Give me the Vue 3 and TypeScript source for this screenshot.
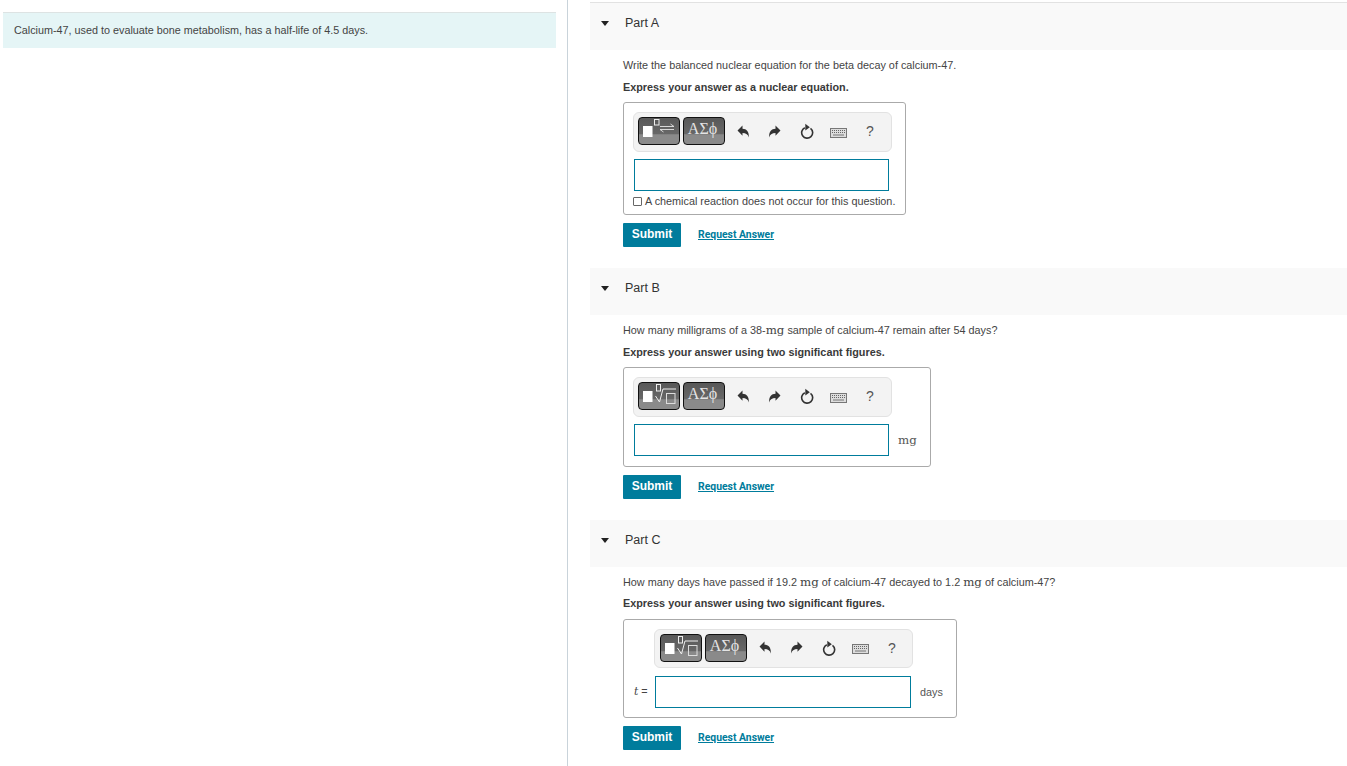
<script setup lang="ts">
interface Seg { t: string; mg?: boolean }
interface Part {
  id: string
  question: Seg[]
  hint: string
  kind: 'chem' | 'mg' | 'days'
}
const parts: Part[] = [
  { id: 'A', kind: 'chem', hint: 'Express your answer as a nuclear equation.',
    question: [{ t: 'Write the balanced nuclear equation for the beta decay of calcium-47.' }] },
  { id: 'B', kind: 'mg', hint: 'Express your answer using two significant figures.',
    question: [{ t: 'How many milligrams of a 38-' }, { t: 'mg', mg: true }, { t: ' sample of calcium-47 remain after 54 days?' }] },
  { id: 'C', kind: 'days', hint: 'Express your answer using two significant figures.',
    question: [{ t: 'How many days have passed if 19.2 ' }, { t: 'mg', mg: true }, { t: ' of calcium-47 decayed to 1.2 ' }, { t: 'mg', mg: true }, { t: ' of calcium-47?' }] }
]
</script>

<template>
  <div class="page">
    <aside class="left">
      <div class="intro">Calcium-47, used to evaluate bone metabolism, has a half-life of 4.5 days.</div>
    </aside>
    <main class="right">
      <section v-for="p in parts" :key="p.id" class="part" :class="'part-' + p.id">
        <header class="part-head">
          <span class="caret"></span>
          <span class="part-title">Part {{ p.id }}</span>
        </header>
        <div class="part-body">
          <p class="question"><template v-for="(s, i) in p.question" :key="i"><span v-if="s.mg" class="mg">{{ s.t }}</span><template v-else>{{ s.t }}</template></template></p>
          <p class="hint">{{ p.hint }}</p>
          <div class="answer" :class="'answer-' + p.kind">
            <div class="answer-grid">
              <span v-if="p.kind === 'days'" class="prefix"><i>t</i> =</span>
              <div class="toolbar">
                <button class="tbtn tbtn-tpl" type="button" aria-label="Templates">
                  <svg width="40" height="26" viewBox="0 0 40 26">
                    <rect x="4" y="8" width="9.500" height="11" fill="#fff" />
                    <template v-if="p.kind === 'chem'">
                      <rect x="15.500" y="1.500" width="4.500" height="5.500" fill="none" stroke="#eee" />
                      <path d="M21 8.500h14l-3.500-2.500M35 11.500H21l3.500 2.500" fill="none" stroke="#e4e4e4" stroke-width=".9" />
                    </template>
                    <template v-else>
                      <rect x="17.500" y="1.500" width="4" height="6.500" fill="none" stroke="#eee" />
                      <path d="M16.500 13l4 6 3.500-13h13" fill="none" stroke="#eee" />
                      <rect x="27.500" y="10.500" width="8.500" height="10" fill="none" stroke="#ddd" />
                    </template>
                  </svg>
                </button>
                <button class="tbtn tbtn-sym" type="button">ΑΣϕ</button>
                <span class="tool t-undo">
                  <svg width="13" height="13" viewBox="0 0 13 13"><path d="M.5 5.500l5-5v3.200c4 0 6.800 2.800 6.300 8.800-.6-3-2.800-4.500-6.300-4.500v2.800z" fill="#333" /></svg>
                </span>
                <span class="tool t-redo">
                  <svg width="13" height="13" viewBox="0 0 13 13"><path d="M12.500 5.500l-5-5v3.200c-4 0-6.800 2.800-6.300 8.800.6-3 2.800-4.500 6.300-4.500v2.800z" fill="#333" /></svg>
                </span>
                <span class="tool t-reset">
                  <svg width="16" height="16" viewBox="0 0 16 16"><path d="M11.500 5.300A5.500 5.500 0 1 1 5.800 4.700" fill="none" stroke="#333" stroke-width="1.600" /><path d="M6.300 .8v6.800L10.800 4.200z" fill="#333" /></svg>
                </span>
                <span class="tool t-keys">
                  <svg width="17" height="10" viewBox="0 0 17 10"><rect x=".5" y=".5" width="16" height="9" fill="#ddd" stroke="#777" /><path d="M2 2.500h13M2 4.500h13" stroke="#666" stroke-dasharray="1 1" /><path d="M3 7h11" stroke="#777" /></svg>
                </span>
                <span class="tool t-help">?</span>
              </div>
              <div class="field-row">
                <span class="field"></span>
                <span v-if="p.kind === 'mg'" class="unit unit-mg">mg</span>
                <span v-if="p.kind === 'days'" class="unit">days</span>
              </div>
            </div>
            <label v-if="p.kind === 'chem'" class="check">
              <span class="box"></span>A chemical reaction does not occur for this question.
            </label>
          </div>
          <div class="actions">
            <button class="submit" type="button">Submit</button>
            <a class="request">Request Answer</a>
          </div>
        </div>
      </section>
    </main>
  </div>
</template>

<style>
html, body { margin: 0; background: #fff; }
</style>

<style scoped>
.page {
  display: flex;
  width: 1347px;
  height: 766px;
  overflow: hidden;
  font-family: "Liberation Sans", Arial, sans-serif;
  color: #333;
}
.left {
  box-sizing: border-box;
  width: 568px;
  height: 766px;
  padding: 12px 11px 0 3px;
  border-right: 1px solid #c9d3da;
  flex: none;
}
.intro {
  box-sizing: border-box;
  height: 36px;
  padding: 0 11px;
  line-height: 35px;
  font-size: 10.8px;
  background: #e5f5f6;
  border-top: 1px solid #dde3e3;
  color: #444;
}
.right { flex: 1; min-width: 0; padding: 2px 0 0 22px; }
.part-head {
  display: flex;
  align-items: center;
  height: 47px;
  background: #f9f9f9;
  padding-bottom: 7px;
  box-sizing: border-box;
}
.part-A .part-head { height: 48px; border-top: 1px solid #e2e2e2; }
.caret {
  width: 0; height: 0;
  margin-left: 11px;
  border-left: 4.5px solid transparent;
  border-right: 4.5px solid transparent;
  border-top: 5px solid #222;
}
.part-title { margin-left: 16px; font-size: 12.5px; color: #333; }
.part-body { padding: 0 0 0 33px; }
.part-A .part-body { height: 218px; }
.part-B .part-body { height: 205px; }
.question {
  margin: 0;
  padding-top: 8px;
  font-size: 10.83px;
  line-height: 15px;
  color: #444;
  height: 15px;
}
.mg { font-family: "DejaVu Serif", "Liberation Serif", serif; font-size: 11.8px; font-weight: 400; }
.hint {
  margin: 7px 0 0;
  font-size: 10.83px;
  line-height: 15px;
  font-weight: 700;
  color: #3a3a3a;
}
.part-C .hint { margin-top: 6px; }
.answer {
  box-sizing: border-box;
  margin-top: 7px;
  border: 1px solid #aaa;
  border-radius: 3px;
  padding: 9px 10px 10px;
  background: #fff;
}
.part-C .answer { margin-top: 8px; }
.answer-chem { width: 283px; height: 113px; }
.answer-mg { width: 308px; height: 100px; }
.answer-days { width: 334px; height: 99px; }
.answer-grid { display: grid; grid-template-columns: auto 1fr; align-items: center; }
.answer-chem .answer-grid, .answer-mg .answer-grid { display: block; }
.prefix {
  grid-row: 2;
  grid-column: 1;
  font-size: 10.8px;
  color: #444;
  width: 21px;
  white-space: nowrap;
  padding-top: 7px;
}
.prefix i { font-family: "DejaVu Serif", serif; font-style: italic; }
.toolbar {
  box-sizing: border-box;
  display: flex;
  align-items: center;
  width: 259px;
  height: 40px;
  margin-left: -1px;
  padding: 0 0 2px 4px;
  background: #f3f3f3;
  border: 1px solid #e2e2e2;
  border-radius: 6px;
}
.answer-days .toolbar { grid-row: 1; grid-column: 2; height: 39px; padding-left: 5px; }
.answer-days .field-row { grid-row: 2; grid-column: 2; margin-top: 8px; }
.tbtn {
  box-sizing: border-box;
  width: 42px;
  height: 28px;
  margin: 0 3px 0 0;
  padding: 0;
  border: 1px solid #111;
  border-radius: 4px;
  background: linear-gradient(#585858 0, #686868 62%, #8a8a8a 64%, #8a8a8a 100%);
  display: flex;
  align-items: flex-start;
  justify-content: center;
  overflow: hidden;
}
.tbtn-sym {
  padding-right: 3px;
  font-family: "Liberation Serif", serif;
  font-size: 16px;
  color: #e4e4e4;
  line-height: 21px;
}
.tool { display: flex; justify-content: center; align-items: center; flex: none; height: 30px; }
.t-undo { width: 13px; margin-left: 9px; }
.t-redo { width: 13px; margin-left: 18px; }
.t-reset { width: 16px; margin-left: 18px; }
.t-keys { width: 17px; margin-left: 15px; }
.t-help { width: 10px; margin-left: 18px; font-size: 14px; color: #555; }
.t-keys svg { margin-top: 3px; }
.field-row { display: flex; align-items: center; margin-top: 7px; }
.field {
  box-sizing: border-box;
  display: block;
  width: 255px;
  height: 32px;
  background: #fff;
  border: 1px solid #007c9c;
}
.answer-days .field { width: 256px; }
.unit { margin-left: 9px; font-size: 10.8px; color: #555; }
.unit-mg { font-family: "DejaVu Serif", serif; font-size: 11.8px; }
.check {
  display: flex;
  align-items: center;
  margin-top: 4px;
  margin-left: -1px;
  font-size: 10.83px;
  line-height: 13px;
  color: #444;
  white-space: nowrap;
}
.box {
  box-sizing: border-box;
  width: 9px;
  height: 9px;
  margin-right: 3px;
  border: 1px solid #666;
  border-radius: 1px;
  background: #fff;
  flex: none;
}
.actions { display: flex; align-items: center; margin-top: 8px; }
.submit {
  box-sizing: border-box;
  width: 58px;
  height: 24px;
  border: 0;
  padding: 0 0 2px;
  border-radius: 1px;
  background: #007c9c;
  color: #fff;
  font-family: "Liberation Sans", sans-serif;
  font-size: 12px;
  font-weight: 700;
}
.request {
  margin-left: 17px;
  padding-bottom: 2px;
  font-family: Roboto, "Liberation Sans", sans-serif;
  font-size: 10.4px;
  font-weight: 700;
  color: #007c9c;
  text-decoration: underline;
}
</style>
